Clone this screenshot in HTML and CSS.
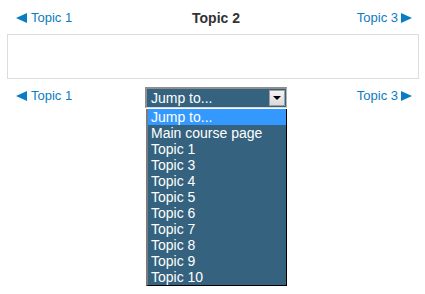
FILE: index.html
```html
<!DOCTYPE html>
<html>
<head>
<meta charset="utf-8">
<link rel="stylesheet" href="styles.css">
</head>
<body>
<div class="page">
  <div class="nav">
    <a class="link left" href="#"><svg class="tri" width="11" height="10" viewBox="0 0 11 10"><polygon points="0,5 11,0 11,10"/></svg>Topic 1</a>
    <div class="title">Topic 2</div>
    <a class="link right" href="#">Topic 3<svg class="tri" width="11" height="10" viewBox="0 0 11 10"><polygon points="11,5 0,0 0,10"/></svg></a>
  </div>
  <div class="box"></div>
  <div class="nav bottom">
    <a class="link left" href="#"><svg class="tri" width="11" height="10" viewBox="0 0 11 10"><polygon points="0,5 11,0 11,10"/></svg>Topic 1</a>
    <div class="jump">
      <div class="select">
        <span class="value">Jump to...</span>
        <span class="btn"><span class="arrow"></span></span>
      </div>
      <ul class="list">
        <li class="sel">Jump to...</li>
        <li>Main course page</li>
        <li>Topic 1</li>
        <li>Topic 3</li>
        <li>Topic 4</li>
        <li>Topic 5</li>
        <li>Topic 6</li>
        <li>Topic 7</li>
        <li>Topic 8</li>
        <li>Topic 9</li>
        <li>Topic 10</li>
      </ul>
    </div>
    <a class="link right" href="#">Topic 3<svg class="tri" width="11" height="10" viewBox="0 0 11 10"><polygon points="11,5 0,0 0,10"/></svg></a>
  </div>
</div>
</body>
</html>
```

FILE: styles.css
```css
html, body {
  margin: 0;
  padding: 0;
  background: #fff;
}
body {
  font-family: "Liberation Sans", Arial, sans-serif;
}
.page {
  padding: 8px 7px 0 7px;
}
.nav {
  display: grid;
  grid-template-columns: 1fr auto 1fr;
  align-items: center;
  padding: 0 6px 0 9px;
  height: 20px;
}
.link {
  color: #0b7cc1;
  text-decoration: none;
  font-size: 13px;
  line-height: 20px;
  display: flex;
  align-items: center;
}
.link.left { justify-self: start; }
.link.right { justify-self: end; }
.tri {
  fill: #0b7cc1;
  display: block;
}
.left .tri { margin-right: 4px; }
.right .tri { margin-left: 3px; }
.title {
  font-weight: bold;
  font-size: 14px;
  color: #333;
  line-height: 20px;
  margin-left: 4px;
}
.box {
  margin-top: 6px;
  height: 43px;
  border: 1px solid #dcdcdc;
  width: 410px;
}
.bottom {
  margin-top: 8px;
  height: auto;
  align-items: start;
}
.bottom .link {
  height: 18px;
  line-height: 18px;
}
.jump {
  margin-left: 4px;
  display: flex;
  flex-direction: column;
}
.select {
  box-sizing: border-box;
  width: 142px;
  height: 21px;
  border-top: 2px solid #8e8e8e;
  border-left: 2px solid #8e8e8e;
  border-right: 1px solid #b5b5b5;
  border-bottom: 1px solid #d8d8d8;
  background: #35637f;
  display: flex;
  align-items: center;
  justify-content: space-between;
}
.value {
  color: #fff;
  font-size: 14px;
  line-height: 16px;
  padding-left: 4px;
}
.btn {
  box-sizing: border-box;
  width: 16px;
  height: 16px;
  margin-right: 1px;
  border: 1px solid #a0a0a0;
  background: linear-gradient(#f4f4f4, #dadada);
  display: flex;
  align-items: center;
  justify-content: center;
}
.arrow {
  width: 0;
  height: 0;
  border-left: 4px solid transparent;
  border-right: 4px solid transparent;
  border-top: 4px solid #000;
}
.list {
  margin: 1px 0 0 1px;
  padding: 0;
  list-style: none;
  width: 141px;
  box-sizing: border-box;
  background: #35637f;
  border-left: 2px solid #7c7c7c;
  border-right: 1px solid #000;
  border-bottom: 1px solid #000;
}
.list li {
  color: #fff;
  font-size: 14px;
  line-height: 16px;
  height: 16px;
  padding-left: 3px;
  white-space: nowrap;
}
.list li.sel {
  background: #3399ff;
}
```
